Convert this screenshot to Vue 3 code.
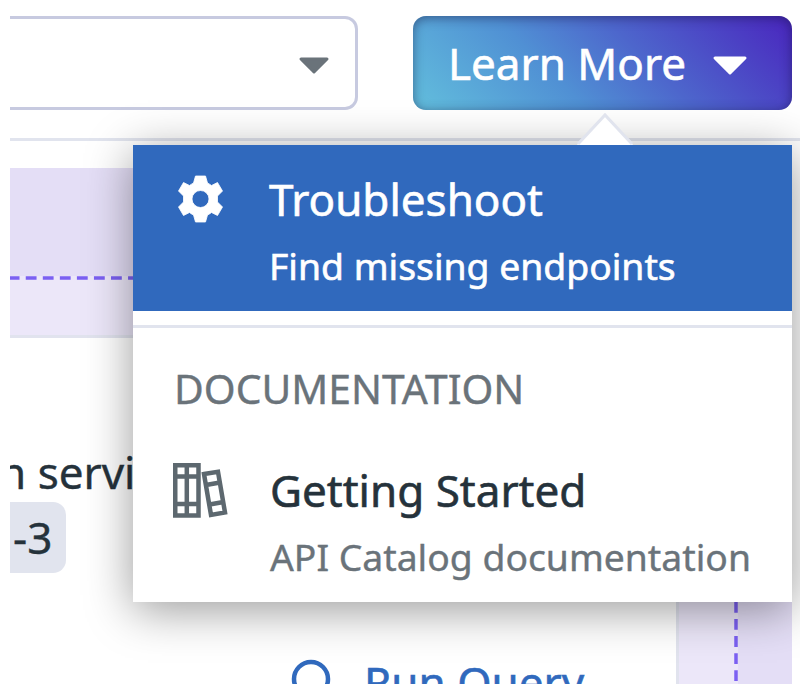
<script setup>
const run = 'Run Query'
</script>

<template>
  <div class="page">
    <header class="bar">
      <div class="select">
        <svg class="caret-grey" viewBox="0 0 32 18"><path d="M3 2H29L16 15Z" /></svg>
      </div>
      <button class="learn">
        <span class="learn-label">Learn More</span>
        <svg class="caret-white" viewBox="0 0 36 22"><path d="M3 3H33L18 18Z" /></svg>
      </button>
    </header>
    <main class="body">
      <section class="band">
        <div class="band-top"></div>
        <svg class="dash-h" viewBox="0 0 782 4"><path d="M-1.300 2H782" /></svg>
      </section>
      <div class="service"><span class="service-text">n servi</span></div>
      <div class="chip"><span class="chip-text">-3</span></div>
      <div class="lower">
        <div class="query">
          <svg class="lens" viewBox="0 0 46 46"><circle cx="21" cy="21" r="17" /><path d="M33 33L43 43" /></svg>
          <span class="query-text">{{ run }}</span>
        </div>
        <aside class="side">
          <svg class="dash-v" viewBox="0 0 4 111"><path d="M2 -5.100V111" /></svg>
          <div class="side-fill"></div>
        </aside>
      </div>
    </main>

    <div class="menu">
      <svg class="arrow" viewBox="0 0 60 34"><path d="M2 34L30 4L58 34Z" /><polyline points="3,33 30,4 57,33" /></svg>
      <div class="item active">
        <svg class="gear" viewBox="0 0 44 46"><path fill-rule="evenodd" d="M17 0H27L29 7Q31 8 33 9.500L39 6.500L44 15L39 20V26L44 31L39 39.500L33 36.500Q31 38 29 39L27 46H17L15 39Q13 38 11 36.500L5 39.500L0 31L5 26V20L0 15L5 6.500L11 9.500Q13 8 15 7ZM22 14.500A8.500 8.500 0 1 0 22 31.500A8.500 8.500 0 1 0 22 14.500Z" /></svg>
        <div class="copy">
          <div class="title">Troubleshoot</div>
          <div class="desc">Find missing endpoints</div>
        </div>
      </div>
      <div class="rule"></div>
      <div class="heading">DOCUMENTATION</div>
      <div class="item doc">
        <svg class="books" viewBox="0 0 56 56"><path d="M2.250 2.250H25.500V52.500H2.250ZM13.800 2V53M2 13.500H26M2 41H26" /><path d="M31 11L45 8.750L52 49.500L38 52ZM33 22L47 19.500M36.500 41.500L50.500 39" /></svg>
        <div class="copy">
          <div class="title">Getting Started</div>
          <div class="desc muted">API Catalog documentation</div>
        </div>
      </div>
    </div>
  </div>
</template>

<style>
body { margin: 0; background: #fff; overflow: hidden; }
</style>

<style scoped>
* { box-sizing: border-box; }
.page {
  position: relative;
  width: 800px;
  height: 692px;
  overflow: hidden;
  background: #fff;
  font-family: "Noto Sans", sans-serif;
  color: #25323b;
  white-space: nowrap;
  -webkit-text-stroke: .4px currentColor;
}
svg { display: block; flex: none; overflow: visible; }
.bar {
  height: 141px;
  margin-left: 10px;
  padding-top: 16px;
  display: flex;
  gap: 55px;
  border-bottom: 3px solid #e1e4ee;
}
.select {
  width: 348px;
  height: 94px;
  border: 3px solid #c7cae0;
  border-left: 0;
  border-radius: 0 13px 13px 0;
  display: flex;
  align-items: center;
  justify-content: flex-end;
  padding-right: 25px;
}
.caret-grey { width: 32px; height: 18px; margin-top: 5px; fill: #6a737a; stroke: #6a737a; stroke-width: 3; stroke-linejoin: round; }
.learn {
  width: 379px;
  height: 94px;
  border: 0;
  border-radius: 13px;
  padding: 0 44px 0 35px;
  display: flex;
  align-items: center;
  justify-content: space-between;
  color: #fff;
  font: 400 44px/60px "Noto Sans", sans-serif;
  background: linear-gradient(45deg, #61bbdc 3%, #5090d4 37%, #4d66cc 60%, #4a2abf 97%);
  box-shadow: inset 0 2px 11px rgba(20, 20, 65, .5);
}
.learn-label { -webkit-text-stroke: .6px #fff; }
.caret-white { width: 36px; height: 22px; margin-top: 5px; fill: #fff; stroke: #fff; stroke-width: 3; stroke-linejoin: round; }
.body { height: 543px; margin: 0 8px 0 10px; padding-top: 27px; overflow: hidden; }
.band { height: 170px; background: #ece7f9; border-bottom: 3px solid #e1e3ee; }
.band-top { height: 108px; background: #e4def6; }
.dash-h { width: 782px; height: 4px; }
.dash-h path, .dash-v path { fill: none; stroke: #7b60f2; stroke-width: 3.500; stroke-dasharray: 10.800 6.250; }
.service { height: 164px; padding-top: 104px; font-size: 44px; line-height: 60px; }
.service-text { display: inline-block; margin-left: -11px; }
.chip { width: 56px; height: 71px; border-radius: 0 13px 13px 0; background: #e1e4ee; display: flex; align-items: center; padding: 0 0 2px 3px; font-size: 44px; line-height: 60px; }
.lower { height: 111px; display: flex; justify-content: space-between; }
.query { display: flex; align-items: flex-start; gap: 28px; padding: 85px 0 0 280px; color: #3069bd; font-size: 44px; line-height: 60px; }
.query-text { margin-top: -6px; -webkit-text-stroke: .6px #3069bd; }
.lens { width: 46px; height: 46px; fill: none; stroke: #3069bd; stroke-width: 4.500; }
.side { width: 116px; display: flex; background: #ece7f9; border-left: 3px solid #e1e3ee; padding-left: 55px; }
.dash-v { width: 4px; height: 111px; }
.side-fill { flex: 1; background: #e4def6; }
.menu {
  position: absolute;
  left: 133px;
  top: 145px;
  width: 659px;
  height: 457px;
  background: #fff;
  box-shadow: 0 8px 44px rgba(0, 0, 0, .4);
}
.arrow { position: absolute; left: 442px; top: -34px; width: 60px; height: 34px; fill: #fff; }
.arrow polyline { fill: none; stroke: #e1e4ee; stroke-width: 3; }
.item { display: flex; }
.active { height: 166px; background: #3069bd; color: #fff; padding: 24px 0 0 45px; }
.gear { width: 45px; height: 46px; margin-top: 7px; fill: #fff; stroke: #fff; stroke-width: .8; stroke-linejoin: round; }
.copy { display: flex; flex-direction: column; }
.active .copy { margin-left: 46px; -webkit-text-stroke: .6px #fff; }
.title { font-size: 44px; line-height: 60px; -webkit-text-stroke-width: .6px; }
.desc { font-size: 37.300px; line-height: 52px; margin-top: 11px; }
.rule { height: 3px; margin-top: 14px; background: #e1e4ee; }
.heading { margin: 32px 0 0 41px; font-size: 40.800px; line-height: 56px; color: #6a737a; }
.doc { padding: 44px 0 0 40px; }
.doc .copy { margin-left: 41px; }
.books { width: 56px; height: 56px; margin-top: 3px; fill: none; stroke: #5d686f; stroke-width: 4.500; }
.muted { color: #6a737a; }
</style>
